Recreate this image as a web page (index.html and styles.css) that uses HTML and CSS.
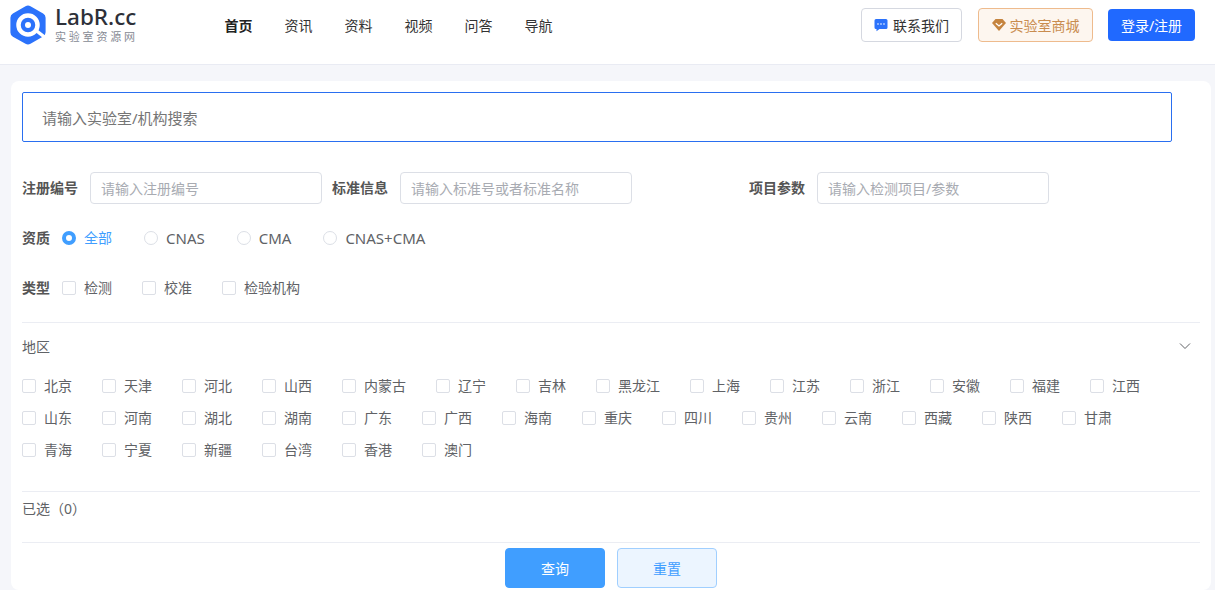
FILE: index.html
```html
<!DOCTYPE html>
<html lang="zh-CN">
<head>
  <meta charset="UTF-8">
  <title>LabR.cc 实验室资源网</title>
  <link rel="stylesheet" href="styles.css">
</head>
<body>
  <header class="header">
    <a class="logo">
      <svg class="logo-mark" viewBox="0 0 36 40" width="36" height="40">
        <path d="M15.5 1.2a5 5 0 0 1 5 0l12.6 7.3a5 5 0 0 1 2.5 4.3v14.4a5 5 0 0 1-2.5 4.3l-12.6 7.3a5 5 0 0 1-5 0L2.9 31.7a5 5 0 0 1-2.5-4.3V12.8a5 5 0 0 1 2.500-4.3z" fill="#2b72fb"/>
        <circle cx="18" cy="20" r="9.500" fill="none" stroke="#fff" stroke-width="4.500"/>
        <circle cx="18" cy="20" r="3" fill="#fff"/>
        <path d="M26 25.500l9 6.800" stroke="#fff" stroke-width="3.400"/>
      </svg>
      <span class="logo-text">
        <span class="logo-name">LabR.cc</span>
        <span class="logo-sub">实验室资源网</span>
      </span>
    </a>
    <nav class="nav">
      <a class="active">首页</a>
      <a>资讯</a>
      <a>资料</a>
      <a>视频</a>
      <a>问答</a>
      <a>导航</a>
    </nav>
    <div class="actions">
      <a class="btn-contact">
        <svg viewBox="0 0 14 14" width="14" height="14">
          <path d="M2 1h10a1.500 1.500 0 0 1 1.500 1.500v7A1.500 1.500 0 0 1 12 11H5.500L2.500 13.300V11H2A1.500 1.500 0 0 1 .5 9.500v-7A1.500 1.500 0 0 1 2 1z" fill="#2b72fb"/>
          <circle cx="4" cy="6" r=".8" fill="#fff"/>
          <circle cx="7" cy="6" r=".8" fill="#fff"/>
          <circle cx="10" cy="6" r=".8" fill="#fff"/>
        </svg>
        联系我们
      </a>
      <a class="btn-shop">
        <svg viewBox="0 0 14 12" width="14" height="12">
          <path d="M3.500 0h7L14 4 7 12 0 4z" fill="#c5843f"/>
          <path d="M3.800 4.200L7 7l3.200-2.800" fill="none" stroke="#fff" stroke-width="1.300"/>
        </svg>
        实验室商城
      </a>
      <a class="btn-login">登录/注册</a>
    </div>
  </header>

  <main class="page">
    <section class="card">
      <input class="search" type="text" placeholder="请输入实验室/机构搜索">

      <div class="field-row">
        <label class="field-label">注册编号</label>
        <input class="field-input" type="text" placeholder="请输入注册编号">
        <label class="field-label second">标准信息</label>
        <input class="field-input" type="text" placeholder="请输入标准号或者标准名称">
        <label class="field-label third">项目参数</label>
        <input class="field-input" type="text" placeholder="请输入检测项目/参数">
      </div>

      <div class="option-row radios">
        <span class="field-label">资质</span>
        <span class="option checked"><i class="radio"></i>全部</span>
        <span class="option latin"><i class="radio"></i>CNAS</span>
        <span class="option latin"><i class="radio"></i>CMA</span>
        <span class="option latin"><i class="radio"></i>CNAS+CMA</span>
      </div>

      <div class="option-row types">
        <span class="field-label">类型</span>
        <span class="option"><i class="box"></i>检测</span>
        <span class="option"><i class="box"></i>校准</span>
        <span class="option"><i class="box"></i>检验机构</span>
      </div>

      <div class="area-head">
        <span>地区</span>
        <svg viewBox="0 0 12 12" width="12" height="12">
          <path d="M1 3.500l5 5 5-5" fill="none" stroke="#606266" stroke-width="1"/>
        </svg>
      </div>

      <div class="area-list" id="areaList"></div>

      <div class="selected">已选（0）</div>

      <div class="submit-row">
        <button class="btn-query">查询</button>
        <button class="btn-reset">重置</button>
      </div>
    </section>
  </main>

  <script>
    const areas = ["北京", "天津", "河北", "山西", "内蒙古", "辽宁", "吉林", "黑龙江", "上海", "江苏", "浙江", "安徽", "福建", "江西",
      "山东", "河南", "湖北", "湖南", "广东", "广西", "海南", "重庆", "四川", "贵州", "云南", "西藏", "陕西", "甘肃",
      "青海", "宁夏", "新疆", "台湾", "香港", "澳门"];

    const list = document.getElementById("areaList");
    areas.forEach(name => {
      const item = document.createElement("span");
      item.className = "option";
      item.innerHTML = '<i class="box"></i>' + name;
      list.appendChild(item);
    });
  </script>
</body>
</html>
```

FILE: styles.css
```css
* {
  box-sizing: border-box;
}
html, body {
  height: 590px;
  overflow: hidden;
}
body {
  margin: 0;
  background-color: #f5f6fa;
  font-family: "Noto Sans", "Noto Sans CJK SC", sans-serif;
  font-size: 14px;
  color: #606266;
}
.header {
  display: flex;
  align-items: center;
  height: 65px;
  padding: 0 20px 15px 10px;
  background-color: #fff;
  border-bottom: 1px solid #e9ebf3;
}
.logo {
  display: flex;
  align-items: center;
  width: 214.500px;
}
.logo-mark {
  margin-right: 9px;
}
.logo-text {
  display: flex;
  flex-direction: column;
}
.logo-name {
  font-size: 22.500px;
  line-height: 24px;
  font-weight: 500;
  color: #2d3039;
}
.logo-sub {
  font-size: 11px;
  line-height: 16px;
  color: #868a94;
  letter-spacing: 2.800px;
}
.nav {
  display: flex;
  gap: 32px;
  color: #333;
}
.nav .active {
  font-weight: 700;
  color: #222;
}
.actions {
  display: flex;
  align-items: center;
  margin-left: auto;
}
.actions a {
  display: flex;
  align-items: center;
  justify-content: center;
  border-radius: 4px;
}
.btn-contact {
  gap: 5px;
  width: 101px;
  height: 34px;
  border: 1px solid #d5d8e0;
  color: #333;
}
.btn-shop {
  gap: 4px;
  width: 115px;
  height: 34px;
  margin-left: 16px;
  background-color: #fdf6ef;
  border: 1px solid #eebb8d;
  color: #c98c4e;
}
.btn-login {
  width: 87px;
  height: 32px;
  margin-left: 15px;
  background-color: #2069ff;
  color: #fff;
}
.page {
  padding: 16px 4px 0 11px;
}
.card {
  height: 509px;
  padding: 11px;
  background-color: #fff;
  border-radius: 8px;
}
input {
  font-family: inherit;
  outline: none;
}
.search {
  display: block;
  width: 1150px;
  height: 50px;
  padding: 1px 19px 0;
  border: 1px solid #2a6ff0;
  border-radius: 2px;
  font-size: 15px;
}
.search::placeholder {
  color: #757575;
}
.field-row {
  display: flex;
  align-items: center;
  margin-top: 30px;
}
.field-label {
  padding-bottom: 2px;
  font-weight: 700;
  font-size: 14px;
  color: #555;
}
.field-label.second {
  margin-left: 10px;
}
.field-label.third {
  margin-left: 117px;
}
.field-input {
  width: 232px;
  height: 32px;
  margin-left: 12px;
  padding: 0 10px;
  border: 1px solid #dcdfe6;
  border-radius: 4px;
  font-size: 14px;
}
.field-input::placeholder {
  color: #a8abb2;
}
.option-row {
  display: flex;
  align-items: center;
  height: 20px;
}
.option-row .field-label {
  margin-right: 12px;
}
.radios {
  margin-top: 24px;
}
.types {
  margin-top: 30px;
}
.radios .option {
  margin-right: 32px;
}
.option {
  display: flex;
  align-items: center;
  margin-right: 30px;
  line-height: 20px;
}
.option.latin {
  font-size: 15px;
}
.option i {
  flex: none;
  width: 14px;
  height: 14px;
  margin-right: 8px;
  background-color: #fff;
  border: 1px solid #dcdfe6;
}
.box {
  border-radius: 2px;
}
.radio {
  border-radius: 50%;
}
.option.checked {
  color: #409eff;
}
.option.checked .radio {
  border: 4px solid #409eff;
}
.area-head {
  display: flex;
  align-items: center;
  justify-content: space-between;
  height: 49px;
  margin-top: 24px;
  padding: 0 9px 2px 0;
  border-top: 1px solid #ebedf3;
}
.area-list {
  display: flex;
  flex-wrap: wrap;
  align-content: flex-start;
  row-gap: 12px;
  height: 121px;
  padding-top: 5px;
  border-bottom: 1px solid #ebedf3;
}
.selected {
  height: 51px;
  padding-top: 6px;
  border-bottom: 1px solid #ebedf3;
}
.submit-row {
  display: flex;
  justify-content: center;
  gap: 12px;
  margin-top: 5px;
}
.submit-row button {
  width: 100px;
  height: 40px;
  border-radius: 4px;
  font-family: inherit;
  font-size: 14px;
}
.btn-query {
  background-color: #409eff;
  border: 1px solid #409eff;
  color: #fff;
}
.btn-reset {
  background-color: #ecf5ff;
  border: 1px solid #a0cfff;
  color: #409eff;
}
```
